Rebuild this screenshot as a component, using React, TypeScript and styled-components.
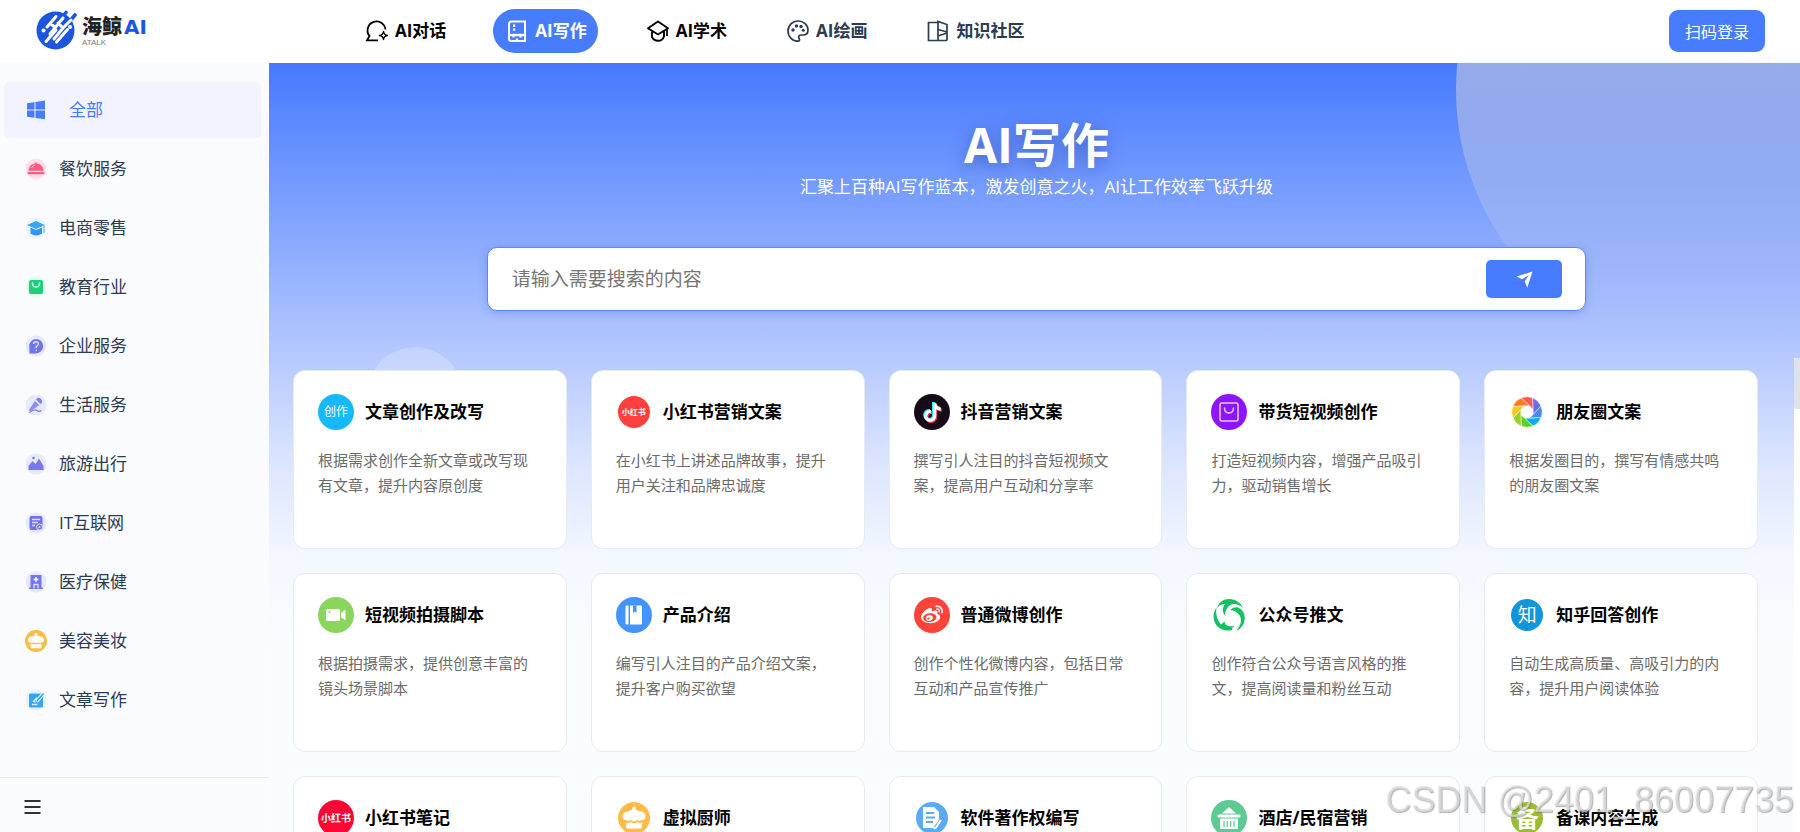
import React from "react";
import styled, { createGlobalStyle } from "styled-components";
import { FaTiktok, FaWeibo } from "react-icons/fa";

const BLUE = "#477cff";

const GlobalStyle = createGlobalStyle`
  *, *::before, *::after { box-sizing: border-box; }
  body {
    margin: 0;
    background: #fff;
    color: #2c3a52;
    font-family: "Open Sans", "Noto Sans CJK SC", sans-serif;
    font-size: 17px;
  }
  a { color: inherit; text-decoration: none; }
  button, input { font: inherit; }
  svg { display: block; flex: none; }
`;

const Shell = styled.div`
  display: flex;
  flex-direction: column;
  height: 100vh;
  overflow: hidden;
`;

const Header = styled.header`
  display: flex;
  align-items: center;
  flex: none;
  height: 63px;
  padding: 0 35px 2px 36px;
  background: #fff;
`;

const Brand = styled.a`
  display: flex;
  align-items: center;
  gap: 5px;
  width: 317px;
  flex: none;
`;

const BrandText = styled.span`
  display: flex;
  flex-direction: column;
`;

const BrandName = styled.span`
  display: flex;
  align-items: center;
  gap: 2px;
  font-size: 20px;
  line-height: 24px;
  font-weight: 900;
  color: #222;
`;

const BrandLatin = styled.span`
  font-family: "DejaVu Sans", sans-serif;
  font-size: 20px;
  font-weight: 700;
  color: #1d55e0;
`;

const BrandSub = styled.small`
  font-family: "Liberation Sans", sans-serif;
  font-size: 8px;
  line-height: 8px;
  color: #777;
`;

const Nav = styled.nav`
  display: flex;
  gap: 36px;
  flex: 1;
`;

const NavLink = styled.a<{ $active?: boolean; $soft?: boolean }>`
  display: flex;
  align-items: center;
  gap: 6px;
  height: 44px;
  padding: 0 11px 0 12px;
  border-radius: 22px;
  font-weight: 700;
  line-height: 24px;
  white-space: nowrap;
  background: ${(p) => (p.$active ? BLUE : "transparent")};
  color: ${(p) => (p.$active ? "#fff" : p.$soft ? "#2c3a52" : "#000")};
`;

const LoginButton = styled.button`
  height: 42px;
  padding: 0 16px;
  border: 0;
  border-radius: 9px;
  background: ${BLUE};
  color: #fff;
  font-size: 16px;
  cursor: pointer;
`;

const Body = styled.div`
  display: flex;
  flex: 1;
  min-height: 0;
`;

const Sidebar = styled.aside`
  display: flex;
  flex-direction: column;
  flex: none;
  width: 269px;
  background: #fafbff;
`;

const Categories = styled.nav`
  display: flex;
  flex-direction: column;
  gap: 3px;
  flex: 1;
  min-height: 0;
  overflow: hidden;
  padding: 19px 8px 0 4px;
`;

const Category = styled.a<{ $active?: boolean }>`
  display: flex;
  align-items: center;
  flex: none;
  gap: ${(p) => (p.$active ? 22 : 12)}px;
  height: 56px;
  padding-left: 21px;
  border-radius: 5px;
  line-height: 24px;
  background: ${(p) => (p.$active ? "#f3f3ff" : "transparent")};
  color: ${(p) => (p.$active ? BLUE : "#2c3a52")};
`;

const SidebarFoot = styled.div`
  display: flex;
  align-items: center;
  flex: none;
  height: 55px;
  padding: 4px 24px 0;
  border-top: 1px solid #e6e8ee;
`;

const MenuButton = styled.button`
  padding: 0;
  border: 0;
  background: none;
  color: #333;
  cursor: pointer;
`;

const Main = styled.main`
  position: relative;
  flex: 1;
  min-width: 0;
  overflow: hidden;
  background: linear-gradient(
    180deg,
    #457aff 0,
    #b1c5ff 280px,
    #dbe5ff 400px,
    #f4f8ff 500px,
    #f9fdff 590px
  );
`;

const BigCircle = styled.div`
  position: absolute;
  top: -239px;
  right: -188px;
  width: 532px;
  height: 532px;
  border-radius: 50%;
  background: linear-gradient(
    180deg,
    rgba(229, 220, 213, 0.5) 45%,
    rgba(229, 220, 213, 0.17) 78%,
    rgba(229, 220, 213, 0) 95%
  );
`;

const SmallCircle = styled.div`
  position: absolute;
  top: 284px;
  left: 98px;
  width: 96px;
  height: 96px;
  border-radius: 50%;
  background: rgba(255, 255, 255, 0.22);
`;

const ScrollArea = styled.div`
  position: relative;
  height: 100%;
  overflow-y: auto;
  scrollbar-width: none;
`;

const ScrollRail = styled.div`
  position: absolute;
  top: 295px;
  right: 0;
  bottom: 0;
  width: 6px;
  background: #fff;
`;

const ScrollThumb = styled.div`
  height: 51px;
  border-radius: 3px 0 0 3px;
  background: #e0e1ea;
`;

const Intro = styled.section`
  display: flex;
  flex-direction: column;
  align-items: center;
  padding: 52px 0 0 4px;
  color: #fff;
`;

const Title = styled.h1`
  margin: 0;
  font-size: 48px;
  line-height: 60px;
  font-weight: 700;
  text-shadow: 0 4px 16px rgba(40, 60, 150, 0.5);
`;

const Subtitle = styled.p`
  margin: 0;
  line-height: 24px;
`;

const SearchForm = styled.form`
  display: flex;
  align-items: center;
  width: 72%;
  max-width: 1100px;
  height: 64px;
  margin: 48px 0 59px;
  padding: 0 23px 0 24px;
  border: 1px solid #5a88fb;
  border-radius: 10px;
  background: #fff;
  box-shadow: 0 2px 8px rgba(60, 90, 190, 0.3);
`;

const SearchInput = styled.input`
  flex: 1;
  min-width: 0;
  padding: 0;
  border: 0;
  outline: 0;
  background: none;
  font-size: 19px;
  line-height: 28px;
  color: #333;
  &::placeholder { color: #757575; opacity: 1; }
`;

const SearchButton = styled.button`
  display: flex;
  align-items: center;
  justify-content: center;
  width: 76px;
  height: 38px;
  padding: 0;
  border: 0;
  border-radius: 5px;
  background: ${BLUE};
  color: #fff;
  cursor: pointer;
`;

const CardGrid = styled.section`
  display: grid;
  grid-template-columns: repeat(5, minmax(0, 1fr));
  gap: 24px;
  padding: 0 42px 24px 24px;
`;

const Card = styled.a`
  display: flex;
  flex-direction: column;
  gap: 18px;
  min-height: 179px;
  padding: 23px 25px 23px 24px;
  border: 1px solid #e8eaee;
  border-radius: 12px;
  background: #fff;
`;

const CardHead = styled.div`
  display: flex;
  align-items: center;
  gap: 11px;
`;

const CardTitle = styled.h2`
  margin: 0;
  font-size: 17px;
  line-height: 24px;
  font-weight: 700;
  color: #000;
  white-space: nowrap;
`;

const CardText = styled.p`
  margin: 0;
  font-size: 15px;
  line-height: 25px;
  color: #6b6b6b;
`;

const Badge = styled.span<{ $bg: string; $small?: boolean }>`
  display: flex;
  align-items: center;
  justify-content: center;
  flex: none;
  width: ${(p) => (p.$small ? 32 : 36)}px;
  height: ${(p) => (p.$small ? 32 : 36)}px;
  margin: ${(p) => (p.$small ? 2 : 0)}px;
  border-radius: 50%;
  background: ${(p) => p.$bg};
  color: #fff;
`;

const BadgeText = styled.span<{ $size: number; $bold?: boolean }>`
  font-size: ${(p) => p.$size}px;
  line-height: 24px;
  font-weight: ${(p) => (p.$bold ? 700 : 400)};
  white-space: nowrap;
`;

const Watermark = styled.div`
  position: fixed;
  right: 6px;
  bottom: 10px;
  font-family: "Liberation Sans", sans-serif;
  font-size: 36px;
  line-height: 44px;
  color: rgba(226, 226, 228, 0.7);
  text-shadow: 1px 1px 1px rgba(100, 100, 100, 0.5);
  pointer-events: none;
`;

/* ---------- header icons ---------- */

const LogoMark = () => (
  <svg width="41" height="41" viewBox="0 0 41 41" aria-hidden="true">
    <circle cx="19.5" cy="20.5" r="19" fill="#1d55e0" />
    <g fill="none" strokeLinecap="round">
      <path d="M30 2.500L24 10M39 5L31 14.500" stroke="#1d55e0" strokeWidth="3.600" />
      <path
        d="M20 6.500L11 17M27 8L14 24M35 10L26 19M20 20L10 31.500M27 18L18 29M31.500 19.500L20.500 32M15 14L18 16.500M22 13L27 18"
        stroke="#fff"
        strokeWidth="3"
      />
    </g>
    <circle cx="7.500" cy="20.500" r="2" fill="#fff" />
    <circle cx="34" cy="17" r="2" fill="#fff" />
  </svg>
);

const NavSvg = ({ children }: { children: React.ReactNode }) => (
  <svg width="24" height="24" viewBox="0 0 24 24" fill="none" stroke="currentColor" strokeWidth="1.700" aria-hidden="true">
    {children}
  </svg>
);

const ChatIcon = () => (
  <NavSvg>
    <path d="M20.500 10.500A9 9 0 1 0 4.500 17L2 21.300H13" strokeWidth="1.800" />
    <path d="M18.500 12.500Q19 16 22.500 16.500Q19 17 18.500 20.500Q18 17 14.500 16.500Q18 16 18.500 12.500Z" strokeWidth="1.400" strokeLinejoin="round" />
  </NavSvg>
);

const BookIcon = () => (
  <NavSvg>
    <path d="M20 2.500H6.500Q4 2.500 4 5V19.500Q4 22 6.500 22H20Z" strokeWidth="2" />
    <path d="M4 16H20" strokeWidth="2.400" />
    <path d="M8 5.500H10.200V8H8ZM8 9.500H10.200V11.800H8Z" fill="currentColor" stroke="none" />
    <path d="M8.500 16.500V18.500M12 21.500V19.500M15.500 16.500V18.500" strokeWidth="2.200" />
  </NavSvg>
);

const ScholarIcon = () => (
  <NavSvg>
    <path d="M12 2.500L22 9.300L12 15.500L2 9.300Z" strokeWidth="1.900" strokeLinejoin="round" />
    <path d="M6 12.500V18Q8 21.800 12 21.800Q16.500 21.800 18 17.500V11.500" strokeWidth="1.900" />
    <path d="M21 10V17" strokeWidth="1.700" />
  </NavSvg>
);

const PaletteIcon = () => (
  <NavSvg>
    <path d="M12.500 22.200C6.500 22.200 2 17.800 2 12C2 6.300 6.500 2 12 2S22 6 22 11C22 14.500 19.500 16 17 16H15C13 16 12 17.500 13 19.200C13.800 20.700 13.800 22.200 12.500 22.200Z" />
    <g fill="currentColor" stroke="none">
      <circle cx="7" cy="11" r="1.700" />
      <circle cx="10.500" cy="7" r="1.700" />
      <circle cx="15" cy="7.500" r="1.700" />
      <circle cx="17.300" cy="11.300" r="1.500" />
    </g>
  </NavSvg>
);

const DoorBookIcon = () => (
  <NavSvg>
    <path d="M12 3.500H2.500V21.500H21" />
    <path d="M12 21.500V2.500L21 5.500V21.500M12 10.500L21 13M12 17L21 14" />
  </NavSvg>
);

const SendIcon = () => (
  <svg width="17" height="17" viewBox="0 0 17 17" aria-hidden="true">
    <path d="M16.500 0.500L0.500 5.500L6 8.300L13 4L8.600 10.500L11.300 16.500Z" fill="currentColor" />
  </svg>
);

/* ---------- sidebar icons ---------- */

const SideSvg = ({ bg, children }: { bg: string; children: React.ReactNode }) => (
  <svg width="22" height="22" viewBox="0 0 22 22" aria-hidden="true">
    <circle cx="11" cy="11" r="10.500" fill={bg} />
    {children}
  </svg>
);

const WindowsIcon = () => (
  <svg width="22" height="22" viewBox="0 0 22 22" aria-hidden="true">
    <path d="M2 4.300L9.500 3.200V10.500H2ZM10.500 3L20 1.600V10.500H10.500ZM2 11.500H9.500V18.700L2 17.700ZM10.500 11.500H20V20.300L10.500 18.900Z" fill={BLUE} />
  </svg>
);

const DishIcon = () => (
  <SideSvg bg="#ffe0e8">
    <path d="M3.500 12.700Q4 6.500 10 5.500Q11 3 12 5.500Q18 6.500 18.500 12.700Z" fill="#ff5b80" />
    <path d="M6.500 10Q7.500 7.800 9.500 7.300" stroke="#ffd5df" fill="none" />
    <rect x="2.500" y="14" width="17" height="2.300" rx="1" fill="#ff5b80" />
  </SideSvg>
);

const CapIcon = () => (
  <SideSvg bg="#e8f3ff">
    <path d="M11 4L19.800 8L11 12L2.200 8Z" fill="#3ba4f5" />
    <path d="M5.500 10.500L11 13L17 10.500V16.500Q11 20.500 5.500 16.500Z" fill="#2e96ee" />
    <path d="M19 8.500V15.500" stroke="#62b7f8" strokeWidth="1.200" />
  </SideSvg>
);

const BagIcon = () => (
  <SideSvg bg="#e5fbf0">
    <rect x="4" y="4" width="14" height="14" rx="2" fill="#1fce7a" />
    <path d="M7.500 7Q7.500 11 11 11T14.500 7" stroke="#c9ffe2" strokeWidth="1.600" fill="none" strokeLinecap="round" />
  </SideSvg>
);

const QuestionIcon = () => (
  <SideSvg bg="#e7e9ff">
    <path d="M11 4A7.200 7.200 0 1 1 11 18.400H4.500L4.300 13A7.200 7.200 0 0 1 11 4Z" fill="#7274ee" />
    <path d="M8.500 9Q8.500 6.800 11 6.800T13.300 9Q13.300 10.300 11.200 11.500V13M11.200 14.500V16" stroke="#e0e1ff" strokeWidth="1.400" fill="none" />
  </SideSvg>
);

const MicIcon = () => (
  <SideSvg bg="#e7e9ff">
    <path d="M11 5.500Q13 2.500 16 5Q18.500 8 15.500 10Z" fill="#7c7ff2" />
    <path d="M10 7L14.200 11.200L6.500 16.500Q3.800 18 4.200 15.500Z" fill="#8a8df5" />
    <path d="M4 18.500Q10 14.800 12 16.500T16.500 16.500" stroke="#7c7ff2" strokeWidth="1.300" fill="none" />
  </SideSvg>
);

const MountainIcon = () => (
  <SideSvg bg="#e7e9ff">
    <path d="M3.500 17V13L7.500 8L10.500 11L14 5.500L18.500 13V17Z" fill="#7779f0" />
    <circle cx="8.500" cy="5" r="1.300" fill="#7779f0" />
  </SideSvg>
);

const FormIcon = () => (
  <SideSvg bg="#e7e9ff">
    <rect x="4.500" y="4" width="13" height="14" rx="2" fill="#6e71f0" />
    <path d="M7 7.500H15M7 10.500H13M7 13.500H10" stroke="#dcdfff" strokeWidth="1.300" />
    <circle cx="14.500" cy="15" r="3" fill="#6e71f0" stroke="#dcdfff" />
    <circle cx="14.500" cy="15" r="1" fill="#dcdfff" />
  </SideSvg>
);

const HospitalIcon = () => (
  <SideSvg bg="#e7e9ff">
    <path d="M5.500 4H16.500V16.500H18V18H4V16.500H5.500Z" fill="#7375f0" />
    <path d="M11 6V11M8.500 8.500H13.500" stroke="#fff" strokeWidth="1.500" />
    <path d="M9 17.500V13.500H13V17.500" stroke="#dcdfff" strokeWidth="1.300" fill="none" />
  </SideSvg>
);

const PenIcon = () => (
  <SideSvg bg="#e6f3ff">
    <rect x="4" y="4.500" width="14" height="14" rx="1.500" fill="#36a3f4" />
    <path d="M18.500 4.500L11.500 12.500" stroke="#e6f3ff" strokeWidth="3.600" />
    <path d="M18.500 4.500L12 12" stroke="#36a3f4" strokeWidth="1.400" />
    <path d="M7 15.500H12.500M12 8.500L8.500 12.500L10.500 13" stroke="#d5ecff" strokeWidth="1.300" fill="none" />
  </SideSvg>
);

const CakeIcon = ({ size }: { size: number }) => (
  <svg width={size} height={size} viewBox="0 0 32 32" aria-hidden="true">
    <circle cx="16" cy="16" r="16" fill="#ffbb45" />
    <circle cx="16" cy="6.300" r="1.900" fill="#fff" />
    <path d="M4.500 14Q5 9.500 10 9.500Q16 5.500 22 9.500Q27 9.500 27.500 14Q27.500 18.500 23.500 18Q21 20 19.500 17.800Q16 21 12.500 17.800Q11 20 8.500 18Q4.500 18.500 4.500 14Z" fill="#fff" />
    <path d="M7.500 20.500Q10 21.500 12.500 20Q16 22.500 19.500 20Q22 21.500 24.500 20.500L23.500 26.500H8.500Z" fill="#fff" />
  </svg>
);

const MenuIcon = () => (
  <svg width="17" height="16" viewBox="0 0 17 16" stroke="currentColor" strokeWidth="2" aria-hidden="true">
    <path d="M0.500 2H16.500M0.500 8H16.500M0.500 14H16.500" />
  </svg>
);

/* ---------- card icons ---------- */

const DouyinIcon = () => (
  <Badge $bg="#170b1a">
    <svg width="22" height="22" viewBox="0 0 22 22" aria-hidden="true">
      <FaTiktok size={19} x={1} y={1} color="#25f4ee" />
      <FaTiktok size={19} x={3} y={3} color="#fe2c55" />
      <FaTiktok size={19} x={2} y={2} color="#fff" />
    </svg>
  </Badge>
);

const BasketIcon = () => (
  <Badge $bg="#8d14ff">
    <svg width="20" height="20" viewBox="0 0 20 20" fill="none" stroke="#e9c9ff" strokeWidth="1.500" aria-hidden="true">
      <rect x="1" y="1" width="18" height="18" rx="2" />
      <path d="M5.500 5.500Q5.500 11 10 11T14.500 5.500" />
    </svg>
  </Badge>
);

const BLADES = ["#ff5a50", "#6a6cf0", "#5085f0", "#00aefc", "#5fd020", "#9ad02a", "#ffc820", "#ff7a18"];

const ShutterIcon = () => (
  <svg width="36" height="36" viewBox="-18 -18 36 36" aria-hidden="true">
    {BLADES.map((color, i) => (
      <path
        key={color}
        d="M-6 -14A15.200 15.200 0 0 1 5.660 -14.100L6.200 -2.500L2.600 -6.100Z"
        fill={color}
        stroke="#fff"
        strokeWidth="0.500"
        transform={`rotate(${i * 45})`}
      />
    ))}
  </svg>
);

const CameraIcon = () => (
  <Badge $bg="#8ad55c">
    <svg width="20" height="14" viewBox="0 0 20 14" aria-hidden="true">
      <rect x="0" y="1" width="14" height="12" rx="1.500" fill="#fff" />
      <path d="M15 5L19.500 1.500V12.500L15 9Z" fill="#fff" />
      <circle cx="3.500" cy="4" r="1.100" fill="#8ad55c" />
    </svg>
  </Badge>
);

const NotebookIcon = () => (
  <Badge $bg="#4394ff">
    <svg width="18" height="20" viewBox="0 0 18 20" aria-hidden="true">
      <path d="M1.500 0.500H3.500V19.500H1.500Q0.500 19.500 0.500 18.500V1.500Q0.500 0.500 1.500 0.500Z" fill="#fff" />
      <path d="M5 0.500H16Q17 0.500 17 1.500V18.500Q17 19.500 16 19.500H5Z" fill="#fff" />
      <path d="M8 0.500H11.500V8L9.700 6.500L8 8Z" fill="#4394ff" />
    </svg>
  </Badge>
);

const WeiboIcon = () => (
  <Badge $bg="#ff4338">
    <FaWeibo size={22} aria-hidden="true" />
  </Badge>
);

const SwirlIcon = () => (
  <svg width="36" height="36" viewBox="-18 -18 36 36" fill="#14c160" aria-hidden="true">
    <path d="M-12 -6C-11 -13 -5 -16 0 -16C7 -16 12 -12 14 -7C9 -12 2 -12 -1 -8C-4 -4 -4 -1 -3 1C-7 -2 -7 -7 -4 -11C-8 -11 -11 -9 -12 -6Z" />
    <path d="M-12.500 -7.500C-17 -2 -16 6 -12 11C-8 15 -2 16.500 3 15L3.500 12.500L6.500 10.500C1 12.500 -4 11 -4.500 6.500L-8 9.500C-12 5 -13.500 -1 -12.500 -7.500Z" />
    <path d="M9 -7.500C16 -5 17.500 4 14 10C12.500 12.500 10.500 14.500 7.500 15.500C12 10 13 6 11 1C10 -1 6 -5 1 -5C4 -7.500 7 -8 9 -7.500Z" />
  </svg>
);

const DocIcon = () => (
  <Badge $bg="#5aaaf8" $small>
    <svg width="22" height="24" viewBox="0 0 22 24" aria-hidden="true">
      <path d="M2 1H13L18 6V14L12 22H2Z" fill="#fff" />
      <path d="M5 7H13M5 11.500H14M5 16H12" stroke="#5aaaf8" strokeWidth="1.800" />
      <path d="M20 14L15 21.500L12.500 22.500" stroke="#fff" strokeWidth="2" fill="none" />
    </svg>
  </Badge>
);

const HotelIcon = () => (
  <Badge $bg="#5cca92">
    <svg width="26" height="24" viewBox="0 0 26 24" aria-hidden="true">
      <path d="M6 7.500L13 1L20 7.500Z" fill="#fff" />
      <rect x="1.500" y="8.500" width="23" height="3" rx="1" fill="#fff" />
      <rect x="4" y="12.500" width="18" height="10.500" rx="1" fill="#fff" />
      <path d="M8 15V21M11.300 15V21M14.700 15V21M18 15V21" stroke="#5cca92" strokeWidth="1.200" />
    </svg>
  </Badge>
);

/* ---------- data ---------- */

const NAV = [
  { label: "AI对话", icon: <ChatIcon /> },
  { label: "AI写作", icon: <BookIcon />, active: true },
  { label: "AI学术", icon: <ScholarIcon /> },
  { label: "AI绘画", icon: <PaletteIcon />, soft: true },
  { label: "知识社区", icon: <DoorBookIcon />, soft: true },
];

const CATEGORIES = [
  { label: "全部", icon: <WindowsIcon />, active: true },
  { label: "餐饮服务", icon: <DishIcon /> },
  { label: "电商零售", icon: <CapIcon /> },
  { label: "教育行业", icon: <BagIcon /> },
  { label: "企业服务", icon: <QuestionIcon /> },
  { label: "生活服务", icon: <MicIcon /> },
  { label: "旅游出行", icon: <MountainIcon /> },
  { label: "IT互联网", icon: <FormIcon /> },
  { label: "医疗保健", icon: <HospitalIcon /> },
  { label: "美容美妆", icon: <CakeIcon size={22} /> },
  { label: "文章写作", icon: <PenIcon /> },
];

const TextBadge = ({ bg, size, small, bold, text }: { bg: string; size: number; small?: boolean; bold?: boolean; text: string }) => (
  <Badge $bg={bg} $small={small}>
    <BadgeText $size={size} $bold={bold}>{text}</BadgeText>
  </Badge>
);

const CARDS = [
  { title: "文章创作及改写", text: "根据需求创作全新文章或改写现有文章，提升内容原创度", icon: <TextBadge bg="#16b9fb" size={12} text="创作" /> },
  { title: "小红书营销文案", text: "在小红书上讲述品牌故事，提升用户关注和品牌忠诚度", icon: <TextBadge bg="#ff403c" size={8} small bold text="小红书" /> },
  { title: "抖音营销文案", text: "撰写引人注目的抖音短视频文案，提高用户互动和分享率", icon: <DouyinIcon /> },
  { title: "带货短视频创作", text: "打造短视频内容，增强产品吸引力，驱动销售增长", icon: <BasketIcon /> },
  { title: "朋友圈文案", text: "根据发圈目的，撰写有情感共鸣的朋友圈文案", icon: <ShutterIcon /> },
  { title: "短视频拍摄脚本", text: "根据拍摄需求，提供创意丰富的镜头场景脚本", icon: <CameraIcon /> },
  { title: "产品介绍", text: "编写引人注目的产品介绍文案，提升客户购买欲望", icon: <NotebookIcon /> },
  { title: "普通微博创作", text: "创作个性化微博内容，包括日常互动和产品宣传推广", icon: <WeiboIcon /> },
  { title: "公众号推文", text: "创作符合公众号语言风格的推文，提高阅读量和粉丝互动", icon: <SwirlIcon /> },
  { title: "知乎回答创作", text: "自动生成高质量、高吸引力的内容，提升用户阅读体验", icon: <TextBadge bg="#1296db" size={19} small text="知" /> },
  { title: "小红书笔记", text: "", icon: <TextBadge bg="#ff0536" size={10} bold text="小红书" /> },
  { title: "虚拟厨师", text: "", icon: <Badge $bg="#fff" $small><CakeIcon size={32} /></Badge> },
  { title: "软件著作权编写", text: "", icon: <DocIcon /> },
  { title: "酒店/民宿营销", text: "", icon: <HotelIcon /> },
  { title: "备课内容生成", text: "", icon: <TextBadge bg="#9bbb32" size={23} small bold text="备" /> },
];

export default function App() {
  return (
    <Shell>
      <GlobalStyle />
      <Header>
        <Brand href="#">
          <LogoMark />
          <BrandText>
            <BrandName>
              海鲸<BrandLatin>AI</BrandLatin>
            </BrandName>
            <BrandSub>ATALK</BrandSub>
          </BrandText>
        </Brand>
        <Nav>
          {NAV.map((n) => (
            <NavLink key={n.label} href="#" $active={n.active} $soft={n.soft}>
              {n.icon}
              {n.label}
            </NavLink>
          ))}
        </Nav>
        <LoginButton type="button">扫码登录</LoginButton>
      </Header>
      <Body>
        <Sidebar>
          <Categories>
            {CATEGORIES.map((c) => (
              <Category key={c.label} href="#" $active={c.active}>
                {c.icon}
                {c.label}
              </Category>
            ))}
          </Categories>
          <SidebarFoot>
            <MenuButton type="button" aria-label="菜单">
              <MenuIcon />
            </MenuButton>
          </SidebarFoot>
        </Sidebar>
        <Main>
          <BigCircle />
          <SmallCircle />
          <ScrollArea>
            <Intro>
              <Title>AI写作</Title>
              <Subtitle>汇聚上百种AI写作蓝本，激发创意之火，AI让工作效率飞跃升级</Subtitle>
              <SearchForm onSubmit={(e) => e.preventDefault()}>
                <SearchInput type="text" aria-label="搜索" placeholder="请输入需要搜索的内容" />
                <SearchButton type="submit" aria-label="搜索">
                  <SendIcon />
                </SearchButton>
              </SearchForm>
            </Intro>
            <CardGrid>
              {CARDS.map((c) => (
                <Card key={c.title} href="#">
                  <CardHead>
                    {c.icon}
                    <CardTitle>{c.title}</CardTitle>
                  </CardHead>
                  {c.text && <CardText>{c.text}</CardText>}
                </Card>
              ))}
            </CardGrid>
          </ScrollArea>
          <ScrollRail>
            <ScrollThumb />
          </ScrollRail>
        </Main>
      </Body>
      <Watermark>CSDN @2401_86007735</Watermark>
    </Shell>
  );
}
